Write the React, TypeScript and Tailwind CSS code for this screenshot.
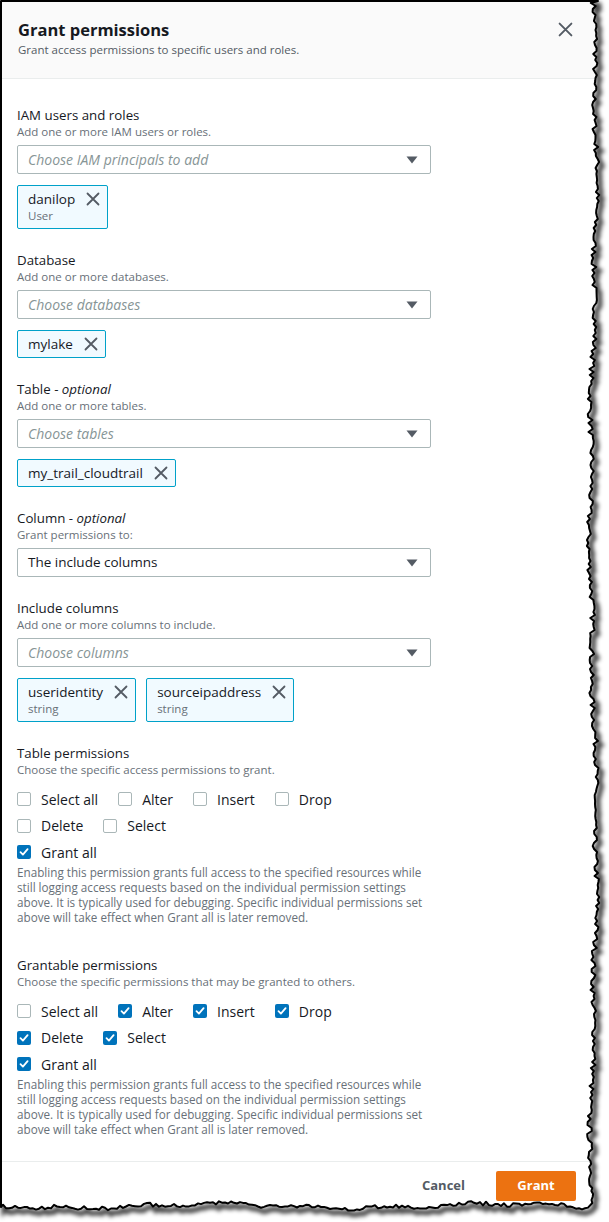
import React from 'react';

type TokenProps = { name: string; sub?: string };

function rng(seed: number) {
  let s = seed;
  return () => {
    s = (s * 16807) % 2147483647;
    return (s - 1) / 2147483646;
  };
}

function tornPath() {
  const r = rng(7);
  const pts: string[] = ['M1 1', 'L598 1'];
  for (let y = 3; y <= 1203; y += 3) {
    const x = 593 + 3 * Math.sin(y / 110) + 1.5 * Math.sin(y / 23) + (r() - 0.5) * 5;
    pts.push(`L${x.toFixed(1)} ${y}`);
  }
  for (let x = 588; x >= 1; x -= 3) {
    const y = 1206 + 2 * Math.sin(x / 45) + 1.2 * Math.sin(x / 13) + (r() - 0.5) * 4;
    pts.push(`L${x} ${y.toFixed(1)}`);
  }
  pts.push('L1 1207 Z');
  return pts.join(' ');
}

const EDGE = tornPath();

function TornEdge() {
  const outside = `M0 0H609V1222H0Z ${EDGE}`;
  return (
    <svg className="absolute inset-0 pointer-events-none" width={609} height={1222}>
      <defs>
        <filter id="blur" x="-10%" y="-10%" width="120%" height="120%">
          <feGaussianBlur stdDeviation="2.2" />
        </filter>
        <clipPath id="out">
          <path d={outside} clipRule="evenodd" />
        </clipPath>
      </defs>
      <path d={outside} fill="#fff" fillRule="evenodd" />
      <g clipPath="url(#out)">
        <path d={EDGE} transform="translate(3 4)" fill="none" stroke="#000" strokeOpacity={0.75} strokeWidth={5} filter="url(#blur)" />
      </g>
      <path d={EDGE} fill="none" stroke="#000" strokeWidth={2} strokeLinejoin="round" />
    </svg>
  );
}

function XIcon({ size = 14 }: { size?: number }) {
  return (
    <svg width={size} height={size} viewBox="0 0 14 14" className="shrink-0">
      <path d="M1.5 1.5l11 11M12.5 1.5l-11 11" stroke="#545b64" strokeWidth={1.8} strokeLinecap="round" fill="none" />
    </svg>
  );
}

function Caret() {
  return (
    <svg width={12} height={8} viewBox="0 0 12 8" className="shrink-0">
      <path d="M0.5 0.5h11L6 7.5z" fill="#545b64" />
    </svg>
  );
}

function Select({ placeholder, value }: { placeholder?: string; value?: string }) {
  return (
    <div className="mt-[6px] h-[29px] w-[414px] border border-[#aab7b8] rounded-[2px] bg-white flex items-center justify-between pl-[10px] pr-[12px]">
      {value ? (
        <span className="text-[13.5px] text-[#16191f]">{value}</span>
      ) : (
        <span className="text-[14px] italic text-[#879596]">{placeholder}</span>
      )}
      <Caret />
    </div>
  );
}

function Token({ name, sub }: TokenProps) {
  return (
    <div className="border border-[#00a1c9] bg-[#f1faff] rounded-[2px] pl-[10px] pr-[7px] pt-[4px] pb-[4px]">
      <div className="flex items-center gap-[11px] h-[18px]">
        <span className="text-[13.5px] text-[#16191f] leading-[18px]">{name}</span>
        <XIcon />
      </div>
      {sub && <div className="text-[11.5px] leading-[15px] text-[#687078] pb-[1px]">{sub}</div>}
    </div>
  );
}

function Label({ title, optional, desc }: { title: string; optional?: boolean; desc: string }) {
  return (
    <>
      <div className="text-[13.3px] leading-[18px] text-[#16191f]">
        {title}
        {optional && (
          <>
            {' - '}
            <i>optional</i>
          </>
        )}
      </div>
      <div className="text-[11.5px] leading-[15px] text-[#687078]">{desc}</div>
    </>
  );
}

function Checkbox({ checked }: { checked: boolean }) {
  return checked ? (
    <div className="w-[14px] h-[14px] rounded-[2px] bg-[#0073bb] flex items-center justify-center shrink-0">
      <svg width={10} height={10} viewBox="0 0 10 10">
        <path d="M1.5 5.2l2.4 2.4L8.6 2.2" stroke="#fff" strokeWidth={1.8} fill="none" strokeLinecap="round" strokeLinejoin="round" />
      </svg>
    </div>
  ) : (
    <div className="w-[14px] h-[14px] rounded-[2px] border border-[#aab7b8] bg-white shrink-0" />
  );
}

function Check({ text, checked }: { text: string; checked: boolean }) {
  return (
    <div className="flex items-center gap-[10px] h-[20px]">
      <Checkbox checked={checked} />
      <span className="text-[14px] text-[#16191f]">{text}</span>
    </div>
  );
}

function Permissions({ title, desc, checks }: { title: string; desc: string; checks: boolean[] }) {
  const [selAll, alter, insert, drop, del, select, all] = checks;
  return (
    <div>
      <Label title={title} desc={desc} />
      <div className="mt-[12px] flex flex-col gap-[6.5px]">
        <div className="flex gap-[20px]">
          <Check text="Select all" checked={selAll} />
          <Check text="Alter" checked={alter} />
          <Check text="Insert" checked={insert} />
          <Check text="Drop" checked={drop} />
        </div>
        <div className="flex gap-[20px]">
          <Check text="Delete" checked={del} />
          <Check text="Select" checked={select} />
        </div>
        <Check text="Grant all" checked={all} />
      </div>
      <p className="mt-[3px] text-[11.7px] leading-[15px] text-[#687078] whitespace-nowrap">
        Enabling this permission grants full access to the specified resources while
        <br />
        still logging access requests based on the individual permission settings
        <br />
        above. It is typically used for debugging. Specific individual permissions set
        <br />
        above will take effect when Grant all is later removed.
      </p>
    </div>
  );
}

export default function App() {
  return (
    <div className="relative w-[609px] h-[1222px] bg-white overflow-hidden font-['Open_Sans',sans-serif]">
      <div className="h-[79px] bg-[#fafafa] border-b border-[#eaeded] pl-[18px] pr-[36px] pt-[19px] flex justify-between">
        <div>
          <h2 className="text-[16.5px] leading-[22px] font-bold text-[#16191f]">Grant permissions</h2>
          <p className="mt-[1px] text-[11.5px] leading-[16px] text-[#545b64]">Grant access permissions to specific users and roles.</p>
        </div>
        <div className="pt-[3px]">
          <XIcon size={15} />
        </div>
      </div>

      <div className="pl-[17px] pt-[27px]">
        <Label title="IAM users and roles" desc="Add one or more IAM users or roles." />
        <Select placeholder="Choose IAM principals to add" />
        <div className="mt-[11px] flex">
          <Token name="danilop" sub="User" />
        </div>

        <div className="mt-[22px]">
          <Label title="Database" desc="Add one or more databases." />
          <Select placeholder="Choose databases" />
          <div className="mt-[11px] flex">
            <Token name="mylake" />
          </div>
        </div>

        <div className="mt-[22px]">
          <Label title="Table" optional desc="Add one or more tables." />
          <Select placeholder="Choose tables" />
          <div className="mt-[11px] flex">
            <Token name="my_trail_cloudtrail" />
          </div>
        </div>

        <div className="mt-[22px]">
          <Label title="Column" optional desc="Grant permissions to:" />
          <Select value="The include columns" />
        </div>

        <div className="mt-[22px]">
          <Label title="Include columns" desc="Add one or more columns to include." />
          <Select placeholder="Choose columns" />
          <div className="mt-[11px] flex gap-[10px]">
            <Token name="useridentity" sub="string" />
            <Token name="sourceipaddress" sub="string" />
          </div>
        </div>

        <div className="mt-[22px]">
          <Permissions
            title="Table permissions"
            desc="Choose the specific access permissions to grant."
            checks={[false, false, false, false, false, false, true]}
          />
        </div>

        <div className="mt-[31px]">
          <Permissions
            title="Grantable permissions"
            desc="Choose the specific permissions that may be granted to others."
            checks={[false, true, true, true, true, true, true]}
          />
        </div>
      </div>

      <div className="mt-[24px] border-t border-[#eaeded] pt-[9px] flex justify-end items-center pr-[33px]">
        <button className="text-[13px] font-bold text-[#545b64] px-[20px] h-[30px]">Cancel</button>
        <button className="ml-[11px] w-[80px] h-[30px] rounded-[2px] bg-[#ec7211] text-white text-[13px] font-bold">Grant</button>
      </div>

      <TornEdge />
    </div>
  );
}
